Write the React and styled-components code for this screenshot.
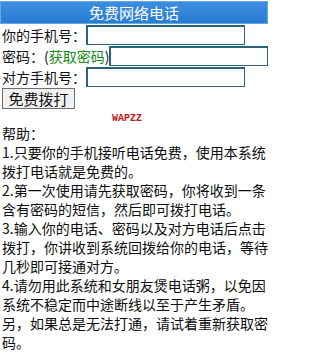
import React from 'react';
import styled, { createGlobalStyle } from 'styled-components';

const GlobalStyle = createGlobalStyle`
  body {
    margin: 0;
    background: #fff;
    font-family: "Noto Sans CJK SC", "Liberation Sans", sans-serif;
    color: #111;
  }
`;

const Page = styled.div`
  width: 268px;
`;

const Header = styled.div`
  height: 21px;
  margin-top: 1px;
  border: 1px solid #6aa6de;
  background: linear-gradient(#3b8ee0, #2a7bd3);
  color: #fff;
  font-size: 15px;
  line-height: 21px;
  text-align: center;
`;

const Form = styled.form`
  display: flex;
  flex-direction: column;
  padding-left: 2px;
`;

const Row = styled.div`
  display: flex;
  align-items: center;
  height: ${(p) => p.$h || 21}px;
  font-size: 14px;
  white-space: nowrap;
`;

const Label = styled.span`
  margin-right: ${(p) => p.$gap || 0}px;
`;

const GetLink = styled.a`
  color: #1a8a1a;
  text-decoration: none;
`;

const Input = styled.input`
  box-sizing: border-box;
  width: 159px;
  height: 20px;
  border: 1px solid #2a6478;
  border-width: 2px 1px 1px 2px;
  padding: 0 2px;
  background: #fff;
`;

const Button = styled.button`
  box-sizing: border-box;
  width: 73px;
  height: 21px;
  margin-top: 1px;
  padding: 0;
  border: 1px solid #6e6e6e;
  background: #f1f1f1;
  color: #111;
  font-family: inherit;
  font-size: 15px;
  line-height: 19px;
`;

const Brand = styled.div`
  margin-top: 5px;
  padding-right: 14px;
  text-align: center;
  font-family: "Liberation Mono", monospace;
  font-weight: bold;
  font-size: 10px;
  line-height: 10px;
  color: #c41a1a;
`;

const Help = styled.div`
  padding-left: 2px;
  font-size: 14px;
  line-height: 19px;
  color: #0d0d0d;
`;

const Line = styled.div``;

const App = () => (
  <Page>
    <GlobalStyle />
    <Header>免费网络电话</Header>
    <Form onSubmit={(e) => e.preventDefault()}>
      <Row>
        <Label>你的手机号：</Label>
        <Input type="text" />
      </Row>
      <Row>
        <Label>
          密码：(<GetLink href="#">获取密码</GetLink>)
        </Label>
        <Input type="password" />
      </Row>
      <Row>
        <Label>对方手机号：</Label>
        <Input type="text" />
      </Row>
      <Row $h={22}>
        <Button type="submit">免费拨打</Button>
      </Row>
    </Form>
    <Brand>WAPZZ</Brand>
    <Help>
      <Line>帮助：</Line>
      <Line>1.只要你的手机接听电话免费，使用本系统拨打电话就是免费的。</Line>
      <Line>2.第一次使用请先获取密码，你将收到一条含有密码的短信，然后即可拨打电话。</Line>
      <Line>3.输入你的电话、密码以及对方电话后点击拨打，你讲收到系统回拨给你的电话，等待几秒即可接通对方。</Line>
      <Line>4.请勿用此系统和女朋友煲电话粥，以免因系统不稳定而中途断线以至于产生矛盾。</Line>
      <Line>另，如果总是无法打通，请试着重新获取密码。</Line>
    </Help>
  </Page>
);

export default App;
